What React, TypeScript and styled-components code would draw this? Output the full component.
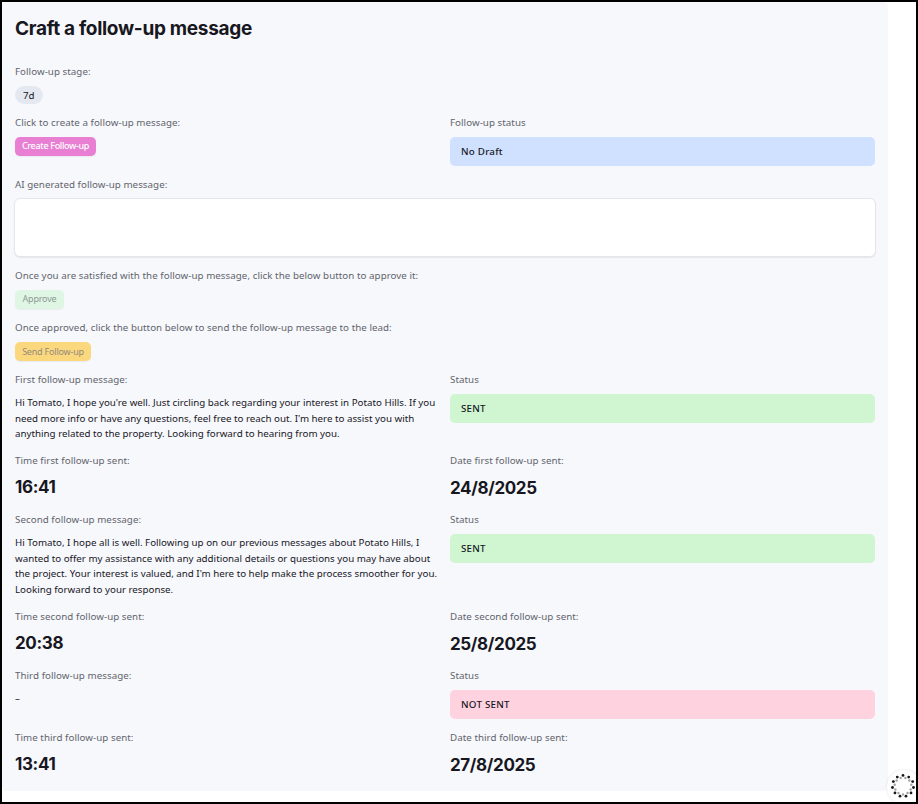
import React from "react";
import styled, { createGlobalStyle } from "styled-components";

const GlobalStyle = createGlobalStyle`
  *, *::before, *::after { box-sizing: border-box; }
  body {
    margin: 0;
    background: #fff;
    color: #17171f;
    font-family: "Noto Sans", "Open Sans", sans-serif;
    font-size: 9.75px;
  }
`;

const Frame = styled.div`
  position: relative;
  width: 918px;
  height: 804px;
  border: 2px solid #000;
  overflow: hidden;
`;

const Panel = styled.main`
  width: 886px;
  height: 789px;
  padding: 13px;
  border-radius: 4px;
  background: #f7f8fc;
`;

const Title = styled.h1`
  margin: 0;
  height: 49px;
  font: 650 19px/27px Inter, sans-serif;
  letter-spacing: -0.3px;
`;

const Row = styled.section<{ $height: number }>`
  display: grid;
  grid-template-columns: 425px 425px;
  column-gap: 10px;
  height: ${(p) => p.$height}px;
`;

const Field = styled.div<{ $wide?: boolean }>`
  display: flex;
  flex-direction: column;
  align-items: flex-start;
  grid-column: ${(p) => (p.$wide ? "1 / -1" : "auto")};
`;

const Label = styled.div`
  height: 22px;
  line-height: 16px;
  letter-spacing: 0.05px;
  color: #62646c;
  white-space: nowrap;
`;

const Chip = styled.span`
  height: 18px;
  padding: 0 8px;
  border-radius: 9px;
  background: #e4e9f1;
  line-height: 19px;
`;

const Button = styled.button<{ $bg: string; $fg: string; $width: number; $medium?: boolean; $line?: number }>`
  width: ${(p) => p.$width}px;
  height: 19px;
  padding: 0 0 ${(p) => (p.$line ?? 2)}px;
  border: 0;
  border-radius: 5px;
  background: ${(p) => p.$bg};
  color: ${(p) => p.$fg};
  box-shadow: 0 1px 1px rgba(30, 35, 50, 0.06);
  font: ${(p) => (p.$medium ? 500 : 400)} 9px/17px "Noto Sans", sans-serif;
  letter-spacing: ${(p) => (p.$medium ? -0.33 : -0.2)}px;
  white-space: nowrap;
`;

const Status = styled.div<{ $bg: string }>`
  align-self: stretch;
  height: 29px;
  padding-left: 11px;
  border-radius: 5px;
  background: ${(p) => p.$bg};
  font-weight: 500;
  line-height: 29px;
  letter-spacing: 0.24px;
`;

const Draft = styled.textarea`
  display: block;
  width: 862px;
  height: 59px;
  margin: -1px 0 0 -1px;
  border: 1px solid #e5e6eb;
  border-radius: 6px;
  background: #fff;
  box-shadow: 0 1px 1px rgba(30, 35, 50, 0.08);
  outline: 0;
  resize: none;
`;

const Message = styled.p`
  margin: 1px 0 0;
  line-height: 15.6px;
  letter-spacing: 0.005px;
  white-space: pre;
`;

const Value = styled.div<{ $drop?: boolean }>`
  margin-top: ${(p) => (p.$drop ? 1 : 0)}px;
  font: 650 17px/24px Inter, sans-serif;
  letter-spacing: -0.36px;
`;

const LoaderBubble = styled.div`
  position: absolute;
  left: 885px;
  top: 768px;
  width: 34px;
  height: 34px;
  border-radius: 50%;
  background: #fff;
  box-shadow: 0 0 3px rgba(0, 0, 0, 0.12);
  svg { display: block; }
`;

const ring = Array.from({ length: 11 }, (_, i) => {
  const a = (i / 11) * Math.PI * 2 - Math.PI / 2;
  return { x: Math.cos(a), y: Math.sin(a) };
});

function Loader() {
  return (
    <LoaderBubble>
      <svg width="34" height="34" viewBox="-16 -16 34 34">
        {ring.map((p, i) => (
          <g key={i}>
            <circle cx={-p.x * 8.4} cy={-p.y * 8.4} r="1.2" fill="#a2a2a2" />
            <circle cx={p.x * 10.6} cy={p.y * 10.6} r="1.4" fill="#18181c" />
          </g>
        ))}
      </svg>
    </LoaderBubble>
  );
}

type FollowUp = {
  name: string;
  message: string;
  status: string;
  color: string;
  time: string;
  date: string;
  heights: [number, number];
};

const followUps: FollowUp[] = [
  {
    name: "first",
    message:
      "Hi Tomato, I hope you're well. Just circling back regarding your interest in Potato Hills. If you\nneed more info or have any questions, feel free to reach out. I'm here to assist you with\nanything related to the property. Looking forward to hearing from you.",
    status: "SENT",
    color: "#cff6d1",
    time: "16:41",
    date: "24/8/2025",
    heights: [81, 59],
  },
  {
    name: "second",
    message:
      "Hi Tomato, I hope all is well. Following up on our previous messages about Potato Hills, I\nwanted to offer my assistance with any additional details or questions you may have about\nthe project. Your interest is valued, and I'm here to help make the process smoother for you.\nLooking forward to your response.",
    status: "SENT",
    color: "#cff6d1",
    time: "20:38",
    date: "25/8/2025",
    heights: [97, 59],
  },
  {
    name: "third",
    message: "–",
    status: "NOT SENT",
    color: "#ffd2df",
    time: "13:41",
    date: "27/8/2025",
    heights: [62, 50],
  },
];

const capitalize = (s: string) => s[0].toUpperCase() + s.slice(1);

export default function App() {
  return (
    <Frame>
      <GlobalStyle />
      <Panel>
        <Title>Craft a follow-up message</Title>
        <Row $height={51}>
          <Field>
            <Label>Follow-up stage:</Label>
            <Chip>7d</Chip>
          </Field>
        </Row>
        <Row $height={62}>
          <Field>
            <Label>Click to create a follow-up message:</Label>
            <Button $bg="#e97fd3" $fg="#fff" $width={81} $medium>Create Follow-up</Button>
          </Field>
          <Field>
            <Label>Follow-up status</Label>
            <Status $bg="#d0e1ff">No Draft</Status>
          </Field>
        </Row>
        <Row $height={91}>
          <Field $wide>
            <Label>AI generated follow-up message:</Label>
            <Draft aria-label="AI generated follow-up message" />
          </Field>
        </Row>
        <Row $height={52}>
          <Field $wide>
            <Label>Once you are satisfied with the follow-up message, click the below button to approve it:</Label>
            <Button $bg="#e0f6e5" $fg="#8d9891" $width={49}>Approve</Button>
          </Field>
        </Row>
        <Row $height={52}>
          <Field $wide>
            <Label>Once approved, click the button below to send the follow-up message to the lead:</Label>
            <Button $bg="#fbd77e" $fg="#948b7b" $width={76} $line={0}>Send Follow-up</Button>
          </Field>
        </Row>
        {followUps.map((f) => (
          <React.Fragment key={f.name}>
            <Row $height={f.heights[0]}>
              <Field>
                <Label>{capitalize(f.name)} follow-up message:</Label>
                <Message>{f.message}</Message>
              </Field>
              <Field>
                <Label>Status</Label>
                <Status $bg={f.color}>{f.status}</Status>
              </Field>
            </Row>
            <Row $height={f.heights[1]}>
              <Field>
                <Label>Time {f.name} follow-up sent:</Label>
                <Value>{f.time}</Value>
              </Field>
              <Field>
                <Label>Date {f.name} follow-up sent:</Label>
                <Value $drop>{f.date}</Value>
              </Field>
            </Row>
          </React.Fragment>
        ))}
      </Panel>
      <Loader />
    </Frame>
  );
}
